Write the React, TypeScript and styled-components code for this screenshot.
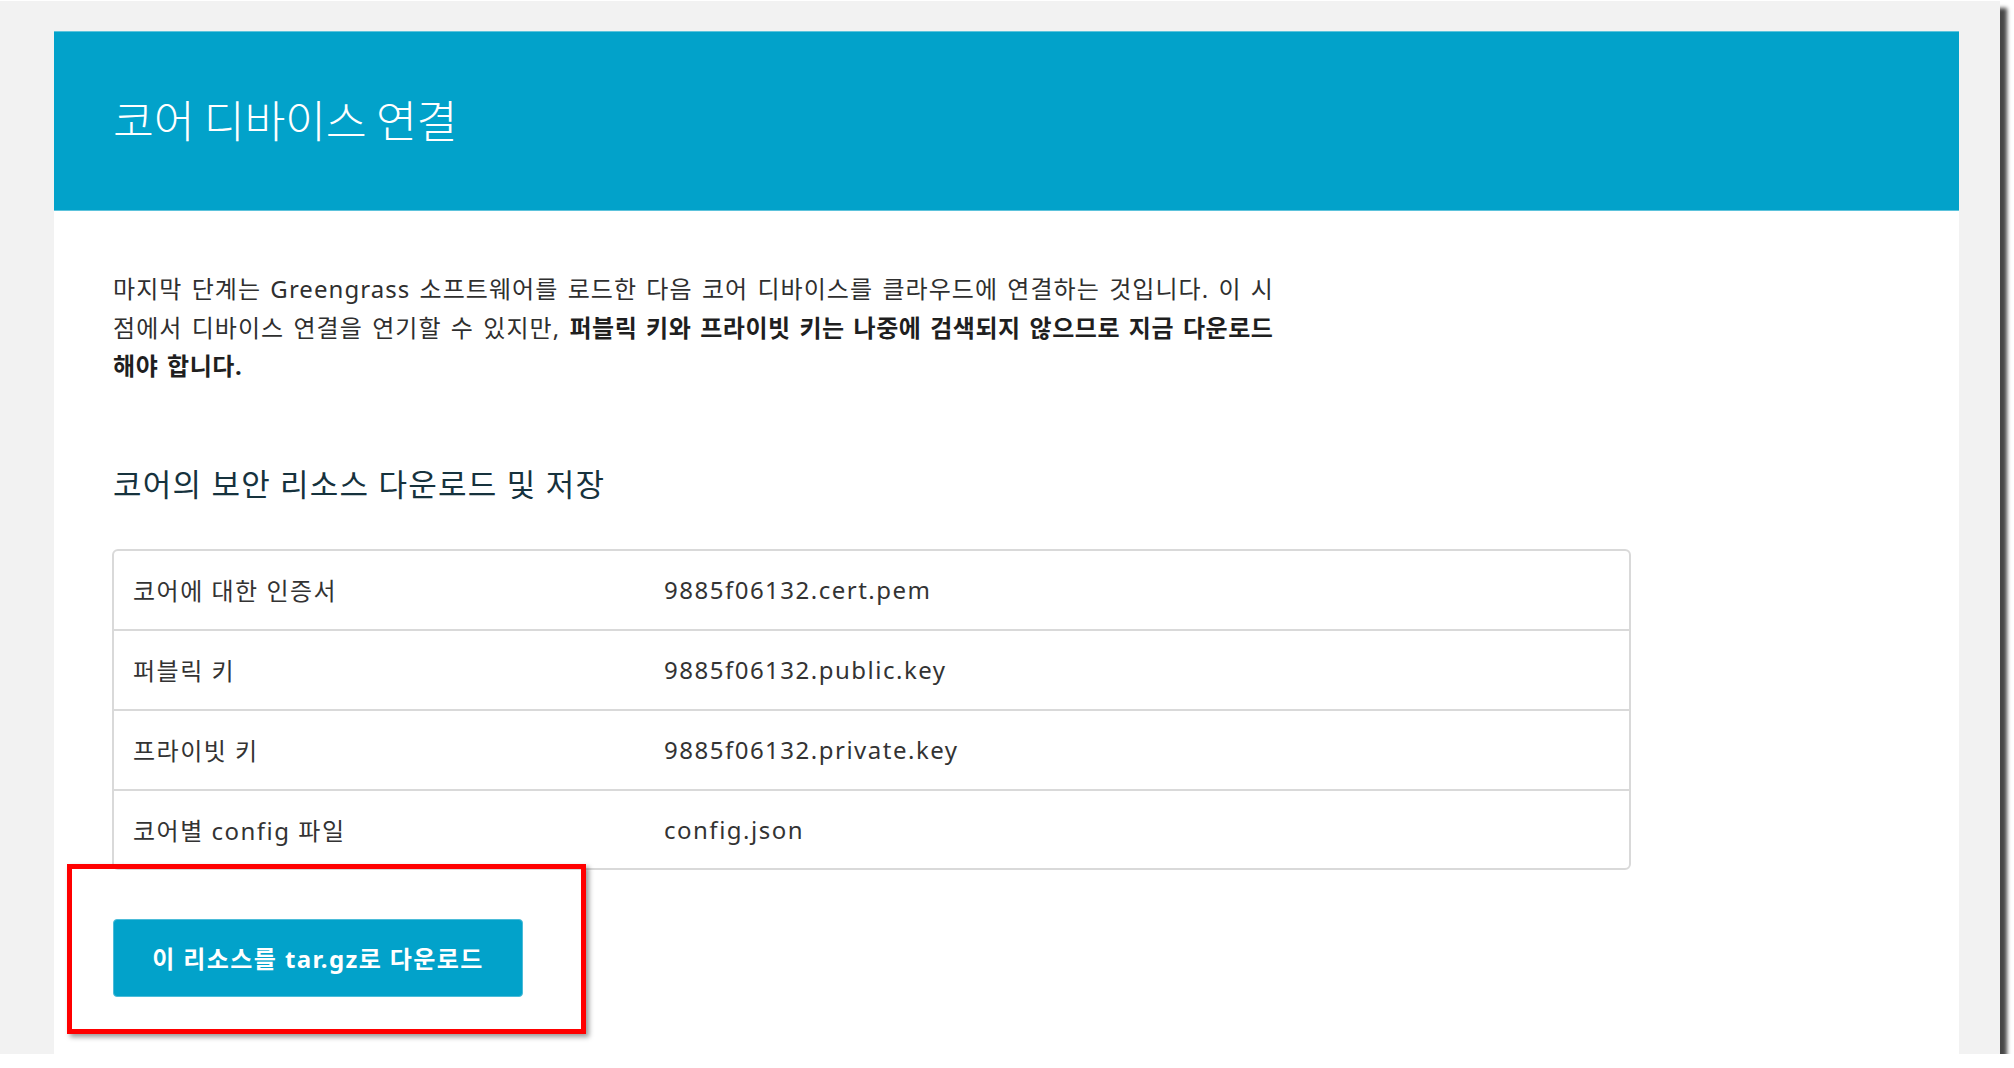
import React from "react";
import styled, { createGlobalStyle } from "styled-components";

const GlobalStyle = createGlobalStyle`
  html, body {
    margin: 0;
    padding: 0;
    background: #ffffff;
  }
  body {
    font-family: "Noto Sans", "Noto Sans CJK KR", sans-serif;
  }
`;

const Frame = styled.div`
  width: 2000px;
  height: 1053px;
  box-sizing: border-box;
  margin-top: 1px;
  padding: 30px 41px 0 54px;
  background: #f2f2f2;
  box-shadow: 7px 7px 4px rgba(0, 0, 0, 0.72);
  display: flex;
`;

const Card = styled.div`
  flex: 1;
  background: #ffffff;
  display: flex;
  flex-direction: column;
`;

const Header = styled.header`
  height: 180px;
  background: #02a2ca;
  display: flex;
  align-items: center;
  padding: 0 0 6px 59px;
  border-top: 1px solid #5cc3dc;
  border-bottom: 1px solid #5cc3dc;
  box-sizing: border-box;
`;

const Title = styled.h1`
  margin: 0;
  color: #ffffff;
  font-family: "Noto Sans CJK KR", sans-serif;
  font-weight: 300;
  font-size: 44.5px;
  letter-spacing: -0.3px;
`;

const Body = styled.div`
  padding: 59px 0 0 59px;
  display: flex;
  flex-direction: column;
  align-items: flex-start;
`;

const Intro = styled.p`
  margin: 0;
  font-size: 24px;
  line-height: 38.5px;
  color: #2f2f2f;
  white-space: nowrap;
  word-spacing: 2px;
  letter-spacing: 1.05px;
`;

const Strong = styled.strong`
  font-weight: 700;
  color: #1f1f1f;
  letter-spacing: 0.55px;
`;

const SectionTitle = styled.h2`
  margin: 78px 0 0 0;
  font-size: 31px;
  line-height: 40px;
  font-weight: 400;
  letter-spacing: 1.2px;
  color: #16323d;
`;

const Table = styled.div`
  margin: 45px 0 0 -1px;
  width: 1519px;
  border: 2px solid #d9d9d9;
  border-radius: 6px;
  box-sizing: border-box;
  display: flex;
  flex-direction: column;
`;

const Row = styled.div<{ $last?: boolean }>`
  height: ${(p) => (p.$last ? "77px" : "80px")};
  display: grid;
  grid-template-columns: 531px 1fr;
  align-items: center;
  padding-left: 19px;
  box-sizing: border-box;
  border-bottom: ${(p) => (p.$last ? "none" : "2px solid #d9d9d9")};
  font-size: 24px;
  letter-spacing: 1.5px;
  color: #333333;
`;

const Cell = styled.span``;

const ButtonWrap = styled.div`
  position: relative;
  margin-top: 49px;
`;

const DownloadButton = styled.button`
  width: 410px;
  height: 78px;
  border: 1px solid #4cbcd9;
  border-radius: 4px;
  background: #02a2ca;
  color: #ffffff;
  font-family: "Noto Sans", "Noto Sans CJK KR", sans-serif;
  font-weight: 700;
  font-size: 24px;
  letter-spacing: 1.4px;
  cursor: pointer;
`;

const Highlight = styled.div`
  position: absolute;
  left: -46px;
  top: -55px;
  width: 519px;
  height: 170px;
  box-sizing: border-box;
  border: 5px solid #ff0000;
  box-shadow: 3px 3px 5px rgba(0, 0, 0, 0.4);
  pointer-events: none;
`;

const rows = [
  ["코어에 대한 인증서", "9885f06132.cert.pem"],
  ["퍼블릭 키", "9885f06132.public.key"],
  ["프라이빗 키", "9885f06132.private.key"],
  ["코어별 config 파일", "config.json"],
];

export default function App() {
  return (
    <>
      <GlobalStyle />
      <Frame>
        <Card>
          <Header>
            <Title>코어 디바이스 연결</Title>
          </Header>
          <Body>
            <Intro>
              마지막 단계는 Greengrass 소프트웨어를 로드한 다음 코어 디바이스를 클라우드에 연결하는 것입니다. 이 시
              <br />
              점에서 디바이스 연결을 연기할 수 있지만,{" "}
              <Strong>
                퍼블릭 키와 프라이빗 키는 나중에 검색되지 않으므로 지금 다운로드
                <br />
                해야 합니다.
              </Strong>
            </Intro>
            <SectionTitle>코어의 보안 리소스 다운로드 및 저장</SectionTitle>
            <Table>
              {rows.map(([label, value], i) => (
                <Row key={label} $last={i === rows.length - 1}>
                  <Cell>{label}</Cell>
                  <Cell>{value}</Cell>
                </Row>
              ))}
            </Table>
            <ButtonWrap>
              <DownloadButton>이 리소스를 tar.gz로 다운로드</DownloadButton>
              <Highlight />
            </ButtonWrap>
          </Body>
        </Card>
      </Frame>
    </>
  );
}
